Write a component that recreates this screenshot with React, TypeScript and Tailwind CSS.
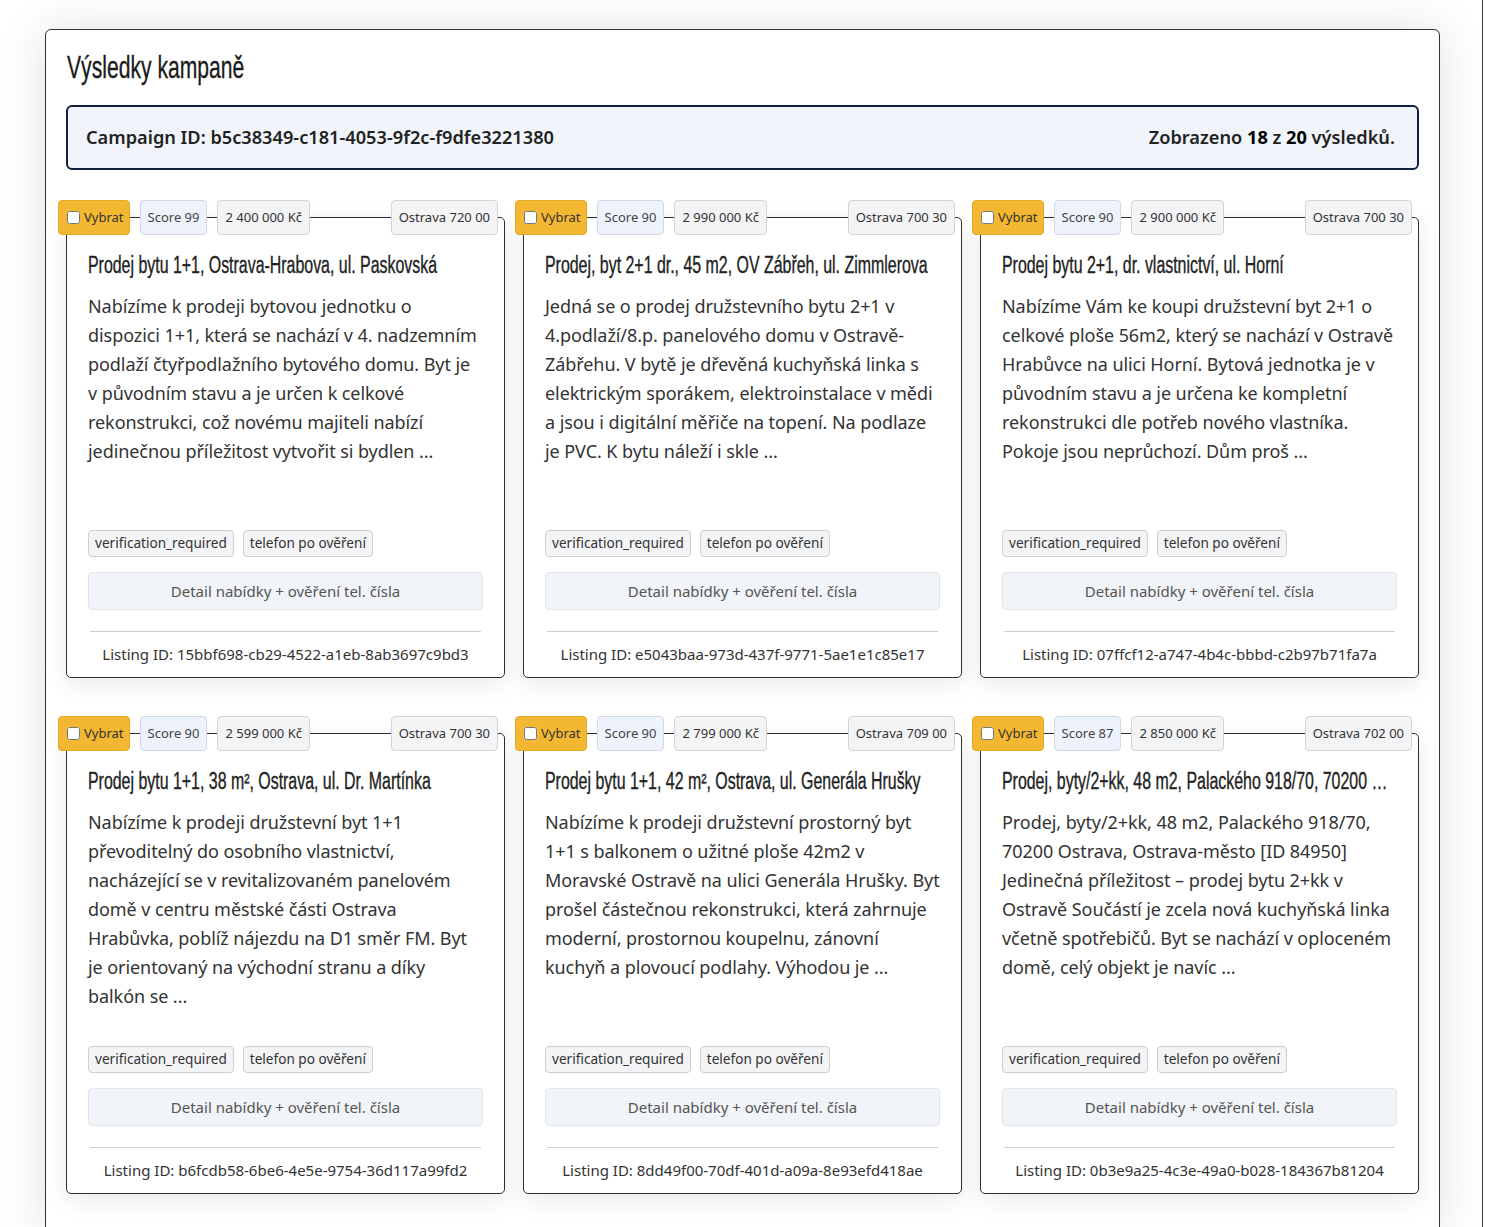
import React from "react";

interface Listing {
  score: number;
  price: string;
  city: string;
  title: string;
  text: string;
  id: string;
}

const listings: Listing[] = [
  {
    score: 99,
    price: "2 400 000 Kč",
    city: "Ostrava 720 00",
    title: "Prodej bytu 1+1, Ostrava-Hrabova, ul. Paskovská",
    text: "Nabízíme k prodeji bytovou jednotku o dispozici 1+1, která se nachází v 4. nadzemním podlaží čtyřpodlažního bytového domu. Byt je v původním stavu a je určen k celkové rekonstrukci, což novému majiteli nabízí jedinečnou příležitost vytvořit si bydlen ...",
    id: "15bbf698-cb29-4522-a1eb-8ab3697c9bd3",
  },
  {
    score: 90,
    price: "2 990 000 Kč",
    city: "Ostrava 700 30",
    title: "Prodej, byt 2+1 dr., 45 m2, OV Zábřeh, ul. Zimmlerova",
    text: "Jedná se o prodej družstevního bytu 2+1 v 4.podlaží/8.p. panelového domu v Ostravě-Zábřehu. V bytě je dřevěná kuchyňská linka s elektrickým sporákem, elektroinstalace v mědi a jsou i digitální měřiče na topení. Na podlaze je PVC. K bytu náleží i skle ...",
    id: "e5043baa-973d-437f-9771-5ae1e1c85e17",
  },
  {
    score: 90,
    price: "2 900 000 Kč",
    city: "Ostrava 700 30",
    title: "Prodej bytu 2+1, dr. vlastnictví, ul. Horní",
    text: "Nabízíme Vám ke koupi družstevní byt 2+1 o celkové ploše 56m2, který se nachází v Ostravě Hrabůvce na ulici Horní. Bytová jednotka je v původním stavu a je určena ke kompletní rekonstrukci dle potřeb nového vlastníka. Pokoje jsou neprůchozí. Dům proš ...",
    id: "07ffcf12-a747-4b4c-bbbd-c2b97b71fa7a",
  },
  {
    score: 90,
    price: "2 599 000 Kč",
    city: "Ostrava 700 30",
    title: "Prodej bytu 1+1, 38 m², Ostrava, ul. Dr. Martínka",
    text: "Nabízíme k prodeji družstevní byt 1+1 převoditelný do osobního vlastnictví, nacházející se v revitalizovaném panelovém domě v centru městské části Ostrava Hrabůvka, poblíž nájezdu na D1 směr FM. Byt je orientovaný na východní stranu a díky balkón se ...",
    id: "b6fcdb58-6be6-4e5e-9754-36d117a99fd2",
  },
  {
    score: 90,
    price: "2 799 000 Kč",
    city: "Ostrava 709 00",
    title: "Prodej bytu 1+1, 42 m², Ostrava, ul. Generála Hrušky",
    text: "Nabízíme k prodeji družstevní prostorný byt 1+1 s balkonem o užitné ploše 42m2 v Moravské Ostravě na ulici Generála Hrušky. Byt prošel částečnou rekonstrukci, která zahrnuje moderní, prostornou koupelnu, zánovní kuchyň a plovoucí podlahy. Výhodou je ...",
    id: "8dd49f00-70df-401d-a09a-8e93efd418ae",
  },
  {
    score: 87,
    price: "2 850 000 Kč",
    city: "Ostrava 702 00",
    title: "Prodej, byty/2+kk, 48 m2, Palackého 918/70, 70200 Ostrava, Ostrava-město",
    text: "Prodej, byty/2+kk, 48 m2, Palackého 918/70, 70200 Ostrava, Ostrava-město [ID 84950] Jedinečná příležitost – prodej bytu 2+kk v Ostravě Součástí je zcela nová kuchyňská linka včetně spotřebičů. Byt se nachází v oploceném domě, celý objekt je navíc ...",
    id: "0b3e9a25-4c3e-49a0-b028-184367b81204",
  },
];

const body = "font-['Noto_Sans','Open_Sans',sans-serif]";
// no condensed face installed, so squeeze an Arial-metric face horizontally
const narrow = "font-['Liberation_Sans',Arial,sans-serif] font-normal origin-left [-webkit-text-stroke:0.35px_currentColor]";

function ListingCard({ item }: { item: Listing }) {
  return (
    <div className="flex flex-col h-[461px] bg-white border border-[#2f2f2f] rounded-[5px] shadow-[0_6px_24px_rgba(0,0,0,0.09)] px-[21px]">
      <div className="flex items-center gap-[10px] h-[35px] -mt-[18px] -ml-[30px] -mr-[15px] text-[13px] text-[#333]">
        <label className="flex items-center gap-[4px] h-[35px] pl-[8px] pr-[5px] bg-[#f4b731] border border-[#e2a928] rounded-[4px]">
          <input type="checkbox" className="w-[13px] h-[13px] m-0" />
          <span>Vybrat</span>
        </label>
        <span className="flex items-center h-[35px] px-[7px] bg-[#eef2fd] border border-[#d3d8e2] rounded-[4px] text-[#444]">
          Score {item.score}
        </span>
        <span className="flex items-center h-[35px] px-[7px] bg-[#f3f4f6] border border-[#d4d4d4] rounded-[4px]">
          {item.price}
        </span>
        <span className="ml-auto flex items-center h-[35px] px-[7px] bg-[#f3f4f6] border border-[#d4d4d4] rounded-[4px]">
          {item.city}
        </span>
      </div>

      <h3 className="mt-[16px] h-[28px] overflow-hidden">
        <div className={`${narrow} w-[144.5%] scale-x-[0.692] text-[23px] leading-[28px] text-[#222] truncate`}>{item.title}</div>
      </h3>
      <p className="mt-[13px] flex-1 text-[18px] leading-[29px] tracking-[-0.07px] text-[#333]">{item.text}</p>

      <div className="flex gap-[9px] text-[13.6px] text-[#333]">
        <span className="flex items-center h-[27px] px-[6px] bg-[#f3f4f6] border border-[#cfcfcf] rounded-[4px]">verification_required</span>
        <span className="flex items-center h-[27px] px-[6px] bg-[#f3f4f6] border border-[#cfcfcf] rounded-[4px]">telefon po ověření</span>
      </div>

      <button className="mt-[15px] h-[38px] w-full bg-[#f1f4f8] border border-[#e2e6eb] rounded-[4px] text-[15px] text-[#555]">
        Detail nabídky + ověření tel. čísla
      </button>

      <div className="mt-[21px] mx-[2px] border-t border-[#cfcfcf]" />
      <div className="mt-[12px] mb-[13px] text-center text-[15px] leading-[20px] text-[#333]">Listing ID: {item.id}</div>
    </div>
  );
}

export default function App() {
  return (
    <div className={`${body} w-[1483px] min-h-screen bg-white border-r border-[#3a3a3a] pt-[29px] pl-[45px]`}>
      <div className="w-[1395px] bg-white border border-[#333] rounded-[6px] shadow-[0_0_50px_rgba(0,0,0,0.12)] px-[20px] pt-[16px] pb-[40px]">
        <h1 className={`${narrow} ml-[1px] scale-x-[0.66] text-[32px] leading-[42px] text-[#1b1b1b]`}>Výsledky kampaně</h1>

        <div className="mt-[17px] h-[65px] flex items-center justify-between bg-[#f1f5fb] border-2 border-[#10223f] rounded-[6px] pl-[18px] pr-[22px] text-[18.2px] font-semibold text-[#222]">
          <span>Campaign ID: b5c38349-c181-4053-9f2c-f9dfe3221380</span>
          <span>
            Zobrazeno <b className="font-bold text-black">18</b> z <b className="font-bold text-black">20</b> výsledků.
          </span>
        </div>

        <div className="mt-[47px] grid grid-cols-3 gap-x-[18px] gap-y-[55px]">
          {listings.map((l) => (
            <ListingCard key={l.id} item={l} />
          ))}
        </div>
      </div>
    </div>
  );
}
